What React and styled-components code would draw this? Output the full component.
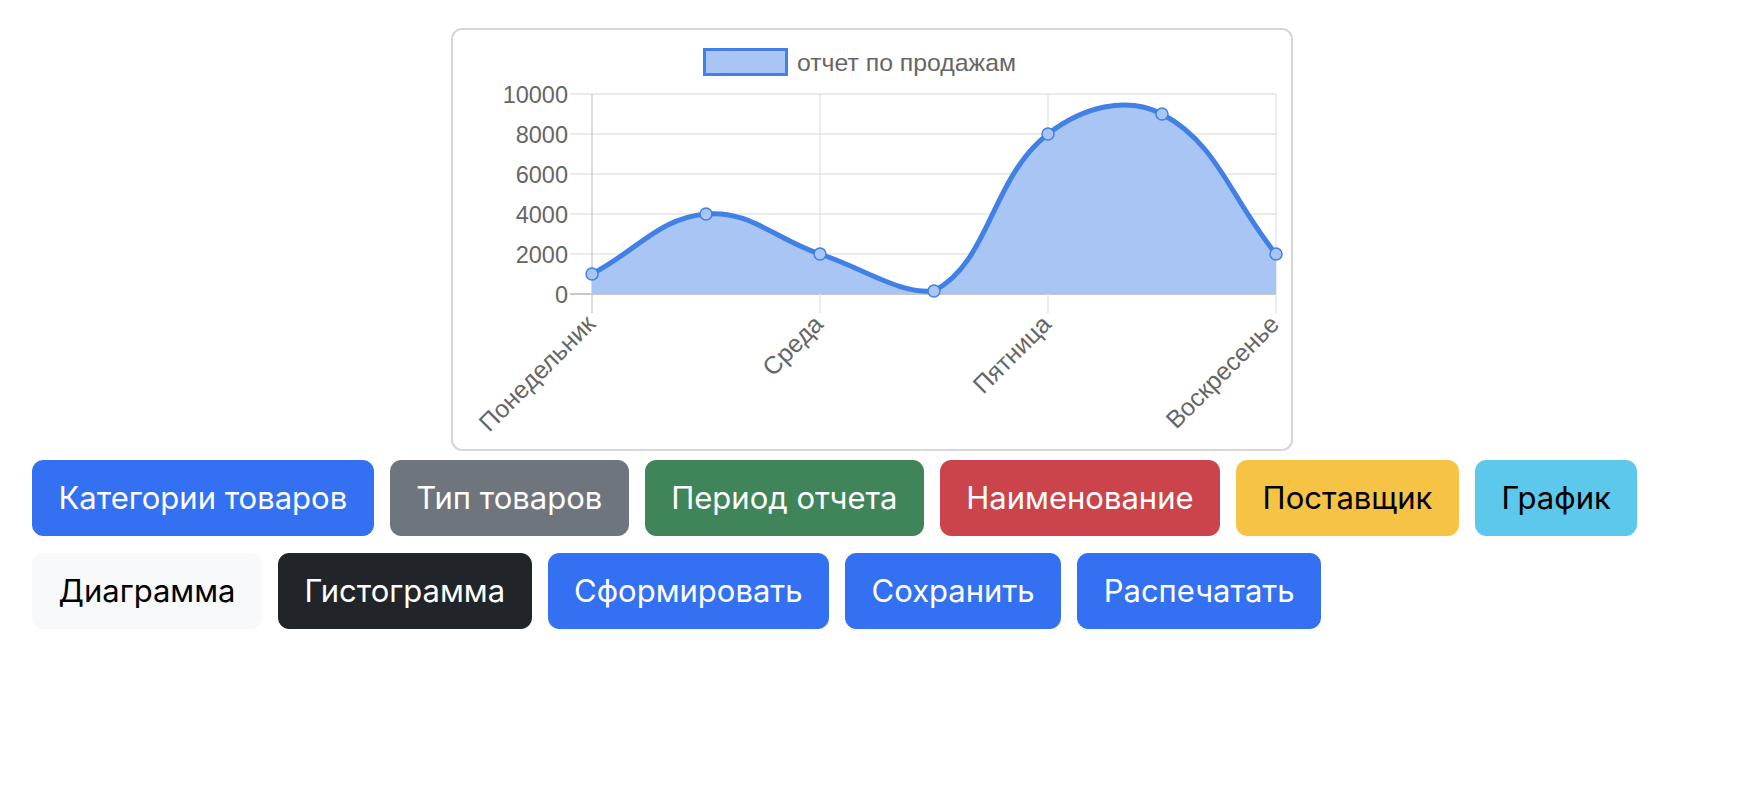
import React from "react";
import styled, { createGlobalStyle } from "styled-components";

const GlobalStyle = createGlobalStyle`
  body {
    margin: 0;
    background: #fff;
    font-family: Inter, "Liberation Sans", sans-serif;
  }
`;

const Page = styled.div`
  padding-top: 28px;
`;

const ChartCard = styled.div`
  width: 838px;
  height: 419px;
  margin-left: 451px;
  border: 2px solid #d6d6d6;
  border-radius: 11px;
  background: #fff;
  svg {
    display: block;
  }
`;

const Toolbar = styled.div`
  display: flex;
  flex-wrap: wrap;
  gap: 17px 16px;
  padding: 9px 0 0 32px;
  width: 1640px;
`;

const palette = {
  primary: { bg: "#3371f2", fg: "#fff" },
  secondary: { bg: "#6e757c", fg: "#fff" },
  success: { bg: "#3f8559", fg: "#fff" },
  danger: { bg: "#cb444b", fg: "#fff" },
  warning: { bg: "#f6c344", fg: "#000" },
  info: { bg: "#5bc8ec", fg: "#000" },
  light: { bg: "#f8f9fa", fg: "#000" },
  dark: { bg: "#212529", fg: "#fff" },
};

const Button = styled.button`
  font-family: Inter, "Liberation Sans", sans-serif;
  font-size: 31px;
  line-height: 44px;
  padding: 15px 25.5px;
  border: 1px solid ${(p) => palette[p.$variant].bg};
  border-radius: 11px;
  background: ${(p) => palette[p.$variant].bg};
  color: ${(p) => palette[p.$variant].fg};
  cursor: pointer;
`;

// chart geometry, in page pixels (viewBox matches the card's inner box)
const LEFT = 592;
const RIGHT = 1276;
const TOP = 94;
const BOTTOM = 294;
const days = ["Понедельник", "Вторник", "Среда", "Четверг", "Пятница", "Суббота", "Воскресенье"];
const values = [1000, 4000, 2000, 150, 8000, 9000, 2000];

const step = (RIGHT - LEFT) / (values.length - 1);
const points = values.map((v, i) => ({
  x: LEFT + i * step,
  y: BOTTOM - (v / 10000) * (BOTTOM - TOP),
}));

const clamp = (v, a, b) => Math.max(a, Math.min(b, v));

function controlPoints(pts, t) {
  return pts.map((cur, i) => {
    const prev = pts[i - 1] || cur;
    const next = pts[i + 1] || cur;
    const d01 = Math.hypot(cur.x - prev.x, cur.y - prev.y);
    const d12 = Math.hypot(next.x - cur.x, next.y - cur.y);
    const s01 = d01 / (d01 + d12) || 0;
    const s12 = d12 / (d01 + d12) || 0;
    const fa = t * s01;
    const fb = t * s12;
    return {
      prev: {
        x: clamp(cur.x - fa * (next.x - prev.x), LEFT, RIGHT),
        y: clamp(cur.y - fa * (next.y - prev.y), TOP, BOTTOM),
      },
      next: {
        x: clamp(cur.x + fb * (next.x - prev.x), LEFT, RIGHT),
        y: clamp(cur.y + fb * (next.y - prev.y), TOP, BOTTOM),
      },
    };
  });
}

const cps = controlPoints(points, 0.4);
let curve = `M${points[0].x} ${points[0].y}`;
for (let i = 1; i < points.length; i++) {
  const a = cps[i - 1].next;
  const b = cps[i].prev;
  curve += ` C${a.x} ${a.y} ${b.x} ${b.y} ${points[i].x} ${points[i].y}`;
}
const area = `${curve} L${RIGHT} ${BOTTOM} L${LEFT} ${BOTTOM} Z`;

const LINE = "#4180e5";
const FILL = "#a9c5f3";
const TEXT = "#666";
const chartFont = "'Liberation Sans', Arial, sans-serif";

function SalesChart() {
  const yTicks = [0, 2000, 4000, 6000, 8000, 10000];
  const shown = [0, 2, 4, 6];
  return (
    <svg width="838" height="419" viewBox="453 30 838 419">
      {/* legend */}
      <rect x="704.5" y="49.5" width="82" height="25" fill={FILL} stroke={LINE} strokeWidth="3" />
      <text x="797" y="64" dominantBaseline="middle" fontSize="24.8" fill={TEXT} fontFamily={chartFont}>
        отчет по продажам
      </text>

      {/* grid */}
      {yTicks.map((v) => {
        const y = BOTTOM - (v / 10000) * (BOTTOM - TOP);
        return (
          <g key={v}>
            <line
              x1="570"
              x2={RIGHT}
              y1={y}
              y2={y}
              stroke={v === 0 ? "#b5b5b5" : "#e4e4e4"}
              strokeWidth="1.5"
            />
            <text
              x="568"
              y={y + 2.5}
              textAnchor="end"
              dominantBaseline="middle"
              fontSize="23.5"
              fill={TEXT}
              fontFamily={chartFont}
            >
              {v}
            </text>
          </g>
        );
      })}
      {shown.map((i) => {
        const x = LEFT + i * step;
        return (
          <g key={i}>
            <line
              x1={x}
              x2={x}
              y1={TOP}
              y2="313"
              stroke={i === 0 ? "#cfcfcf" : "#e4e4e4"}
              strokeWidth="1.5"
            />
            <text
              x={x}
              y="321"
              textAnchor="end"
              dominantBaseline="middle"
              fontSize="24.8"
              fill={TEXT}
              fontFamily={chartFont}
              transform={`rotate(-45 ${x} 321)`}
            >
              {days[i]}
            </text>
          </g>
        );
      })}

      {/* data */}
      <path d={area} fill={FILL} />
      <path d={curve} fill="none" stroke={LINE} strokeWidth="5" strokeLinejoin="round" />
      {points.map((p, i) => (
        <circle key={i} cx={p.x} cy={p.y} r="6" fill={FILL} stroke={LINE} strokeWidth="1.5" />
      ))}
    </svg>
  );
}

const buttons = [
  ["Категории товаров", "primary"],
  ["Тип товаров", "secondary"],
  ["Период отчета", "success"],
  ["Наименование", "danger"],
  ["Поставщик", "warning"],
  ["График", "info"],
  ["Диаграмма", "light"],
  ["Гистограмма", "dark"],
  ["Сформировать", "primary"],
  ["Сохранить", "primary"],
  ["Распечатать", "primary"],
];

export default function App() {
  return (
    <Page>
      <GlobalStyle />
      <ChartCard>
        <SalesChart />
      </ChartCard>
      <Toolbar>
        {buttons.map(([label, variant]) => (
          <Button key={label} $variant={variant}>
            {label}
          </Button>
        ))}
      </Toolbar>
    </Page>
  );
}
